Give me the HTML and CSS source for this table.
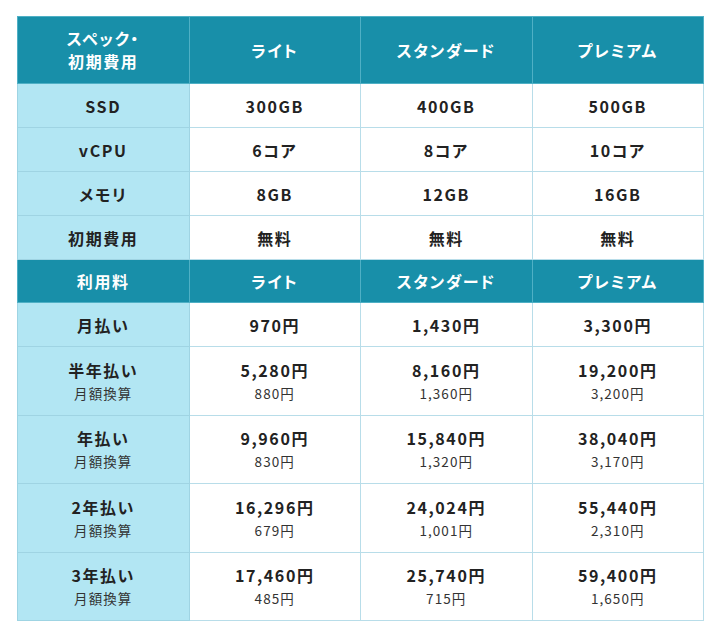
FILE: index.html
```html
<!DOCTYPE html>
<html lang="ja">
<head>
<meta charset="utf-8">
<link rel="stylesheet" href="styles.css">
</head>
<body>
<table class="plan">
  <tbody>
    <tr class="row-head row-head--tall">
      <th class="label">スペック・<br>初期費用</th>
      <th>ライト</th>
      <th>スタンダード</th>
      <th>プレミアム</th>
    </tr>
    <tr class="row">
      <th class="label">SSD</th>
      <td>300GB</td><td>400GB</td><td>500GB</td>
    </tr>
    <tr class="row">
      <th class="label">vCPU</th>
      <td>6コア</td><td>8コア</td><td>10コア</td>
    </tr>
    <tr class="row">
      <th class="label">メモリ</th>
      <td>8GB</td><td>12GB</td><td>16GB</td>
    </tr>
    <tr class="row">
      <th class="label">初期費用</th>
      <td>無料</td><td>無料</td><td>無料</td>
    </tr>
    <tr class="row-head">
      <th class="label">利用料</th>
      <th>ライト</th>
      <th>スタンダード</th>
      <th>プレミアム</th>
    </tr>
    <tr class="row">
      <th class="label">月払い</th>
      <td>970円</td><td>1,430円</td><td>3,300円</td>
    </tr>
    <tr class="row row--double">
      <th class="label"><span class="main">半年払い</span><span class="sub">月額換算</span></th>
      <td><span class="main">5,280円</span><span class="sub">880円</span></td>
      <td><span class="main">8,160円</span><span class="sub">1,360円</span></td>
      <td><span class="main">19,200円</span><span class="sub">3,200円</span></td>
    </tr>
    <tr class="row row--double">
      <th class="label"><span class="main">年払い</span><span class="sub">月額換算</span></th>
      <td><span class="main">9,960円</span><span class="sub">830円</span></td>
      <td><span class="main">15,840円</span><span class="sub">1,320円</span></td>
      <td><span class="main">38,040円</span><span class="sub">3,170円</span></td>
    </tr>
    <tr class="row row--double">
      <th class="label"><span class="main">2年払い</span><span class="sub">月額換算</span></th>
      <td><span class="main">16,296円</span><span class="sub">679円</span></td>
      <td><span class="main">24,024円</span><span class="sub">1,001円</span></td>
      <td><span class="main">55,440円</span><span class="sub">2,310円</span></td>
    </tr>
    <tr class="row row--double">
      <th class="label"><span class="main">3年払い</span><span class="sub">月額換算</span></th>
      <td><span class="main">17,460円</span><span class="sub">485円</span></td>
      <td><span class="main">25,740円</span><span class="sub">715円</span></td>
      <td><span class="main">59,400円</span><span class="sub">1,650円</span></td>
    </tr>
  </tbody>
</table>
</body>
</html>
```

FILE: styles.css
```css
html, body {
  margin: 0;
  background: #ffffff;
}
body {
  padding: 16px 16px 0 17px;
  font-family: "Noto Sans CJK JP", "Noto Sans", sans-serif;
  color: #222222;
  font-feature-settings: "palt";
}
.plan {
  width: 687px;
  border-collapse: collapse;
  table-layout: fixed;
}
.plan th,
.plan td {
  border: 1px solid #b8dde9;
  text-align: center;
  vertical-align: middle;
  padding: 0;
  font-size: 16px;
  font-weight: 700;
  letter-spacing: 0.1em;
  line-height: 24px;
}
.row th.label {
  background: #b2e6f3;
  border-color: #9fd4e3;
}
.row td {
  background: #ffffff;
}
.row {
  height: 44px;
}
.row--double {
  height: 68.5px;
}
.row-head {
  height: 43px;
}
.row-head--tall {
  height: 67px;
}
.row-head th {
  background: #188fa9;
  color: #ffffff;
  border-color: #4fb0c5;
  line-height: 23px;
}
.row-head th.label {
  color: #ffffff;
}
.main {
  display: block;
}
.sub {
  display: block;
  font-size: 13.5px;
  font-weight: 400;
  line-height: 22px;
  color: #333333;
  letter-spacing: 0.08em;
}
```
